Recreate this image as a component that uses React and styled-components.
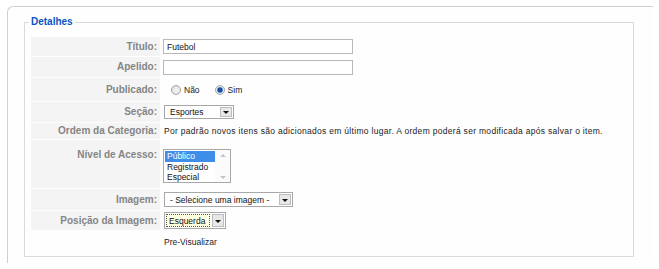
import React from 'react';
import styled, { createGlobalStyle } from 'styled-components';

const GlobalStyle = createGlobalStyle`
  body {
    margin: 0;
    background: #fff;
    font-family: "Liberation Sans", Arial, sans-serif;
  }
`;

const Panel = styled.div`
  box-sizing: border-box;
  height: 257px;
  margin: 6px 6px 0 7px;
  padding: 9px 19px 0 16px;
  background: #fefefe;
  border-top: 1px solid #cfcfcf;
  border-left: 1px solid #cfcfcf;
  border-top-left-radius: 6px;
`;

const Fieldset = styled.fieldset`
  box-sizing: border-box;
  height: 241px;
  margin: 0;
  padding: 9px 6px 0 6px;
  border: 1px solid #dadada;
  min-width: 0;
`;

const Legend = styled.legend`
  margin-left: -2px;
  padding: 0 2px;
  font-size: 10px;
  line-height: 12px;
  font-weight: bold;
  color: #0b55c4;
`;

const Form = styled.div`
  display: flex;
  flex-direction: column;
  gap: 1px;
`;

const Row = styled.div`
  display: grid;
  grid-template-columns: 129px 1fr;
  column-gap: 2px;
  height: ${(p) => p.$h}px;
`;

const Key = styled.div`
  display: flex;
  justify-content: flex-end;
  align-items: ${(p) => (p.$top ? 'flex-start' : 'center')};
  padding: ${(p) => (p.$top ? '10px' : '0')} 3px 0 0;
  background: ${(p) => (p.$blank ? 'transparent' : '#f4f4f4')};
  font-size: 10px;
  line-height: 10px;
  font-weight: bold;
  color: #858585;
`;

const Value = styled.div`
  display: flex;
  align-items: ${(p) => (p.$top ? 'flex-start' : 'center')};
  padding: ${(p) => (p.$top ? '9px' : '0')} 0 0 1px;
  font-size: 8.5px;
  color: #1a1a1a;
  white-space: nowrap;
`;

const TextInput = styled.div`
  box-sizing: border-box;
  width: 190px;
  height: 15px;
  padding-left: 3px;
  display: flex;
  align-items: center;
  border: 1px solid #b8b8b8;
  background: #fff;
  font-size: 8.5px;
  color: #111;
`;

const RadioGroup = styled.div`
  display: flex;
  align-items: center;
  padding-left: 8px;
`;

const Radio = styled.span`
  box-sizing: border-box;
  width: 10px;
  height: 10px;
  border-radius: 50%;
  border: 1px solid #a4a4a4;
  background: ${(p) =>
    p.$checked
      ? 'radial-gradient(circle, #1d4f9e 0 2.2px, #7fa6dc 2.8px, #eef2f8 3.6px)'
      : 'radial-gradient(circle at 60% 60%, #f4f4f4, #dcdcdc)'};
  margin-right: 3px;
`;

const RadioText = styled.span`
  margin-right: ${(p) => p.$gap || 0}px;
  color: #222;
`;

const Select = styled.div`
  box-sizing: border-box;
  width: ${(p) => p.$w}px;
  height: ${(p) => p.$hgt || 15}px;
  margin-left: 1px;
  display: flex;
  align-items: stretch;
  border: 1px solid #a8a8a8;
  background: #fff;
  padding: 1px;
`;

const SelectText = styled.div`
  flex: 1;
  display: flex;
  align-items: center;
  padding-left: ${(p) => (p.$focus ? 2 : 3)}px;
  font-size: 8.5px;
  color: #111;
  background: ${(p) => (p.$focus ? '#ffffe1' : 'transparent')};
  border: 1px dotted ${(p) => (p.$focus ? '#555' : 'transparent')};
  margin-right: 2px;
`;

const DropButton = styled.div`
  box-sizing: border-box;
  width: 12px;
  display: flex;
  align-items: center;
  justify-content: center;
  background: #e8e8e8;
  border: 1px solid #bdbdbd;

  &::after {
    content: '';
    border-left: 3px solid transparent;
    border-right: 3px solid transparent;
    border-top: 3px solid #111;
    margin-top: 1px;
  }
`;

const ListBox = styled.div`
  box-sizing: border-box;
  width: 68px;
  height: 34px;
  display: flex;
  border: 1px solid #a8a8a8;
  background: #fff;
`;

const Options = styled.div`
  flex: 1;
  display: flex;
  flex-direction: column;
  padding: 1px 0 0 1px;
`;

const Option = styled.div`
  height: 10.5px;
  line-height: 10.5px;
  padding-left: 2px;
  font-size: 8.5px;
  color: ${(p) => (p.$selected ? '#fff' : '#111')};
  background: ${(p) => (p.$selected ? '#3d8ee8' : 'transparent')};
`;

const ScrollTrack = styled.div`
  width: 15px;
  display: flex;
  flex-direction: column;
  justify-content: space-between;
  align-items: center;
  padding: 4px 0 3px;
  background: #fbfbfb;
`;

const Arrow = styled.span`
  border-left: 3px solid transparent;
  border-right: 3px solid transparent;
  ${(p) => (p.$up ? 'border-bottom' : 'border-top')}: 3px solid #c4c4c4;
`;

const Note = styled.span`
  padding-left: 1px;
  letter-spacing: ${(p) => p.$spread || 0}px;
`;

const App = () => {
  return (
    <>
      <GlobalStyle />
      <Panel>
        <Fieldset>
          <Legend>Detalhes</Legend>
          <Form>
            <Row $h={19}>
              <Key>Título:</Key>
              <Value>
                <TextInput>Futebol</TextInput>
              </Value>
            </Row>
            <Row $h={20}>
              <Key>Apelido:</Key>
              <Value>
                <TextInput />
              </Value>
            </Row>
            <Row $h={23}>
              <Key>Publicado:</Key>
              <Value>
                <RadioGroup>
                  <Radio />
                  <RadioText $gap={15}>Não</RadioText>
                  <Radio $checked />
                  <RadioText>Sim</RadioText>
                </RadioGroup>
              </Value>
            </Row>
            <Row $h={20}>
              <Key>Seção:</Key>
              <Value>
                <Select $w={70} $hgt={14}>
                  <SelectText>Esportes</SelectText>
                  <DropButton />
                </Select>
              </Value>
            </Row>
            <Row $h={16}>
              <Key>Ordem da Categoria:</Key>
              <Value>
                <Note $spread={0.3}>
                  Por padrão novos itens são adicionados em último lugar. A ordem poderá ser modificada após salvar o item.
                </Note>
              </Value>
            </Row>
            <Row $h={48}>
              <Key $top>Nível de Acesso:</Key>
              <Value $top>
                <ListBox>
                  <Options>
                    <Option $selected>Público</Option>
                    <Option>Registrado</Option>
                    <Option>Especial</Option>
                  </Options>
                  <ScrollTrack>
                    <Arrow $up />
                    <Arrow />
                  </ScrollTrack>
                </ListBox>
              </Value>
            </Row>
            <Row $h={21}>
              <Key>Imagem:</Key>
              <Value>
                <Select $w={129}>
                  <SelectText>- Selecione uma imagem -</SelectText>
                  <DropButton />
                </Select>
              </Value>
            </Row>
            <Row $h={19}>
              <Key>Posição da Imagem:</Key>
              <Value>
                <Select $w={62} $hgt={17}>
                  <SelectText $focus>Esquerda</SelectText>
                  <DropButton />
                </Select>
              </Value>
            </Row>
            <Row $h={22}>
              <Key $blank />
              <Value>
                <Note>Pre-Visualizar</Note>
              </Value>
            </Row>
          </Form>
        </Fieldset>
      </Panel>
    </>
  );
};

export default App;
